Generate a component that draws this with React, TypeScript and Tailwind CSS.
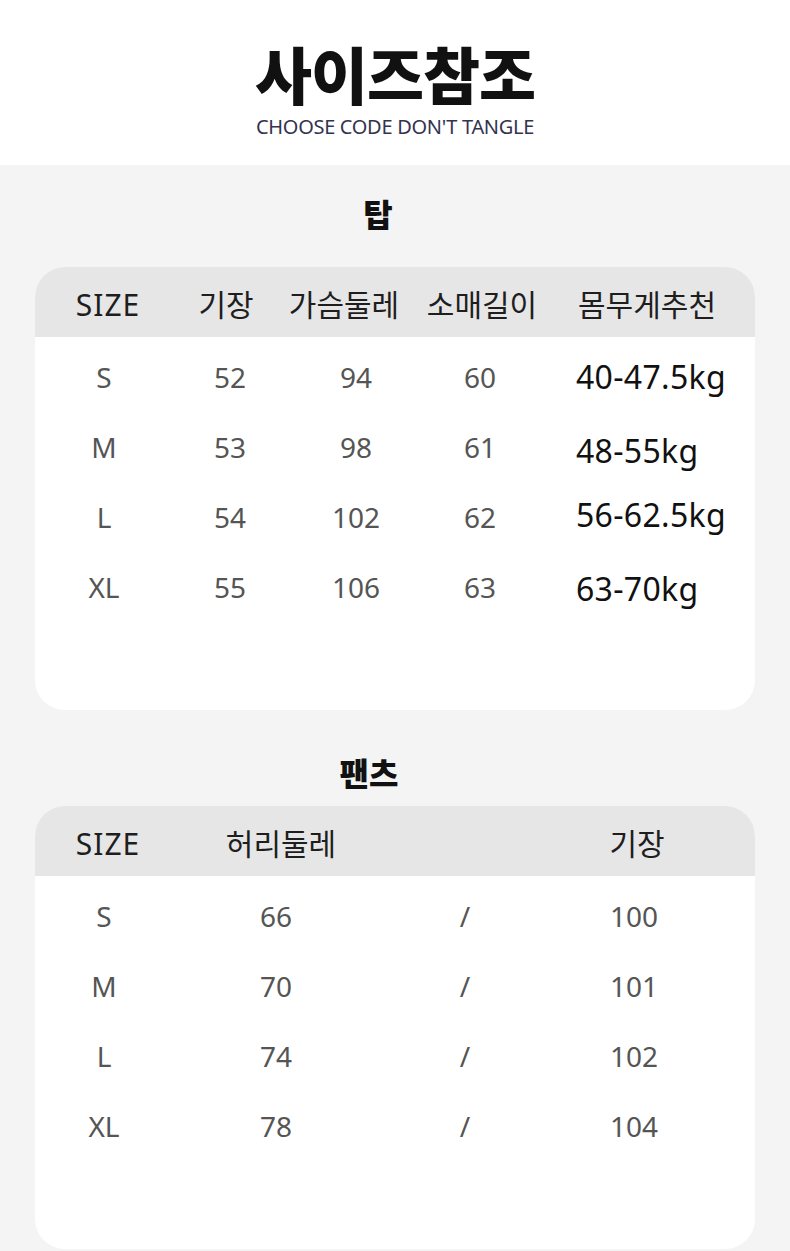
import React from 'react';

const KR = "font-['Noto_Sans','Noto_Sans_CJK_KR',sans-serif]";

const topRows = [
  { size: 'S', len: '52', chest: '94', sleeve: '60', weight: '40-47.5kg', wy: 'mt-0' },
  { size: 'M', len: '53', chest: '98', sleeve: '61', weight: '48-55kg', wy: 'mt-[8px]' },
  { size: 'L', len: '54', chest: '102', sleeve: '62', weight: '56-62.5kg', wy: 'mt-[-4px]' },
  { size: 'XL', len: '55', chest: '106', sleeve: '63', weight: '63-70kg', wy: 'mt-[4px]' },
];

const pantsRows = [
  { size: 'S', waist: '66', len: '100' },
  { size: 'M', waist: '70', len: '101' },
  { size: 'L', waist: '74', len: '102' },
  { size: 'XL', waist: '78', len: '104' },
];

export default function App() {
  return (
    <div className={`w-[790px] h-[1251px] bg-[#f4f4f4] overflow-hidden ${KR}`}>
      <div className="bg-white h-[165px] flex flex-col items-center pt-[42px]">
        <div className="text-[62px] leading-[62px] font-black text-[#111] tracking-[-1px] font-['Noto_Sans_CJK_KR',sans-serif]">
          사이즈참조
        </div>
        <div className="mt-[11px] text-[20px] leading-[24px] text-[#33334f] tracking-[-0.3px]">
          CHOOSE CODE DON&apos;T TANGLE
        </div>
      </div>

      <div className="text-center pr-[34px] mt-[28px] text-[32px] leading-[44px] font-black text-[#111]">탑</div>

      <div className="mx-[35px] mt-[30px] h-[443px] bg-white rounded-[30px] overflow-hidden">
        <div className="h-[70px] bg-[#e6e6e6] flex items-center pt-[4px] text-[30px] text-[#1e1e1e]">
          <div className="w-[146px] text-center tracking-[1px]">SIZE</div>
          <div className="w-[90px] text-center">기장</div>
          <div className="w-[146px] text-center">가슴둘레</div>
          <div className="w-[130px] text-center">소매길이</div>
          <div className="w-[200px] text-center">몸무게추천</div>
        </div>
        <div className="pt-[5px]">
          {topRows.map((r) => (
            <div key={r.size} className="h-[70px] flex items-center text-[28px] text-[#555]">
              <div className="w-[138px] text-center">{r.size}</div>
              <div className="w-[114px] text-center">{r.len}</div>
              <div className="w-[138px] text-center">{r.chest}</div>
              <div className="w-[110px] text-center">{r.sleeve}</div>
              <div className={`pl-[41px] text-[32px] tracking-[0.3px] text-[#111] ${r.wy}`}>{r.weight}</div>
            </div>
          ))}
        </div>
      </div>

      <div className="text-center pr-[52px] mt-[42px] text-[32px] leading-[44px] font-black text-[#111]">팬츠</div>

      <div className="mx-[35px] mt-[10px] h-[443px] bg-white rounded-[30px] overflow-hidden">
        <div className="h-[70px] bg-[#e6e6e6] flex items-center pt-[4px] text-[30px] text-[#1e1e1e]">
          <div className="w-[146px] text-center tracking-[1px]">SIZE</div>
          <div className="w-[200px] text-center">허리둘레</div>
          <div className="w-[168px] text-center"></div>
          <div className="w-[176px] text-center">기장</div>
        </div>
        <div className="pt-[5px]">
          {pantsRows.map((r) => (
            <div key={r.size} className="h-[70px] flex items-center text-[28px] text-[#555]">
              <div className="w-[138px] text-center">{r.size}</div>
              <div className="w-[206px] text-center">{r.waist}</div>
              <div className="w-[172px] text-center">/</div>
              <div className="w-[166px] text-center">{r.len}</div>
            </div>
          ))}
        </div>
      </div>
    </div>
  );
}
